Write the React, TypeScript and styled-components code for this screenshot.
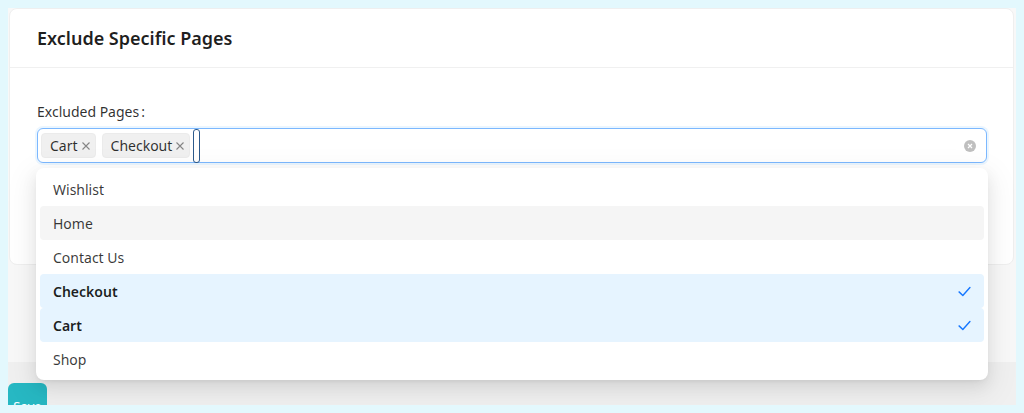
import React from "react";
import styled, { createGlobalStyle } from "styled-components";

const Global = createGlobalStyle`
  html, body { margin: 0; padding: 0; }
  body {
    background: #e3f8fd;
    font-family: "Noto Sans", "Open Sans", Arial, sans-serif;
    color: rgba(0,0,0,0.88);
    width: 1024px;
    height: 413px;
    overflow: hidden;
  }
  * { box-sizing: border-box; }
`;

const Frame = styled.div`
  margin: 8px;
  width: 1008px;
  height: 397px;
  display: flex;
  flex-direction: column;
  overflow: hidden;
  background: #f8f8f8;
`;

const Main = styled.div`
  flex: 1;
  padding: 0 2px 0 1px;
`;

const Card = styled.section`
  height: 257px;
  background: #fff;
  border: 1px solid #efefef;
  border-radius: 8px;
`;

const CardHeader = styled.header`
  height: 59px;
  display: flex;
  align-items: center;
  padding-left: 27px;
  border-bottom: 1px solid #f0f0f0;
`;

const Title = styled.h2`
  margin: 0;
  font-size: 18px;
  font-weight: 600;
  color: rgba(0,0,0,0.88);
`;

const CardBody = styled.div`
  padding: 33px 26px 0 27px;
`;

const Label = styled.label`
  display: block;
  font-size: 14px;
  line-height: 22px;
  color: rgba(0,0,0,0.82);
  margin-bottom: 5px;
`;

const Colon = styled.span`
  margin-left: 2px;
`;

const SelectWrap = styled.div`
  position: relative;
`;

const SelectBox = styled.div`
  height: 35px;
  display: flex;
  align-items: center;
  gap: 6px;
  padding: 0 10px 0 3px;
  border: 1px solid #7cb8ff;
  border-radius: 6px;
  box-shadow: 0 0 0 2px rgba(5,145,255,0.08);
  background: #fff;
`;

const Tag = styled.span`
  height: 25px;
  display: inline-flex;
  align-items: center;
  gap: 3px;
  padding: 0 4px 0 8px;
  background: rgba(0,0,0,0.06);
  border: 1px solid #ebebeb;
  border-radius: 4px;
  font-size: 14px;
  color: rgba(0,0,0,0.82);
`;

const Caret = styled.span`
  width: 7px;
  height: 34px;
  border: 1.5px solid #2d5a8c;
  border-radius: 3px;
  margin-left: -3px;
`;

const Spacer = styled.span`
  flex: 1;
`;

const Dropdown = styled.ul`
  position: absolute;
  left: -1px;
  right: -1px;
  top: 40px;
  margin: 0;
  padding: 4px;
  list-style: none;
  background: #fff;
  border-radius: 8px;
  box-shadow: 0 6px 16px 0 rgba(0,0,0,0.08), 0 3px 6px -4px rgba(0,0,0,0.12), 0 9px 28px 8px rgba(0,0,0,0.05);
  z-index: 5;
`;

const Option = styled.li<{ $selected?: boolean; $active?: boolean }>`
  height: 34px;
  display: flex;
  align-items: center;
  justify-content: space-between;
  padding: 0 12px 0 13px;
  border-radius: 4px;
  font-size: 14px;
  font-weight: ${(p) => (p.$selected ? 600 : 400)};
  color: rgba(0,0,0,${(p) => (p.$selected ? 0.88 : 0.78)});
  background: ${(p) => (p.$selected ? "#e6f4ff" : p.$active ? "#f5f5f5" : "transparent")};
`;

const Footer = styled.div`
  height: 43px;
  background: #f0f0f0;
  display: flex;
  align-items: flex-start;
  padding-top: 21px;
`;

const TealButton = styled.button`
  width: 39px;
  height: 30px;
  border: none;
  border-radius: 6px 6px 0 0;
  background: #27b8c3;
  color: #fff;
  font-family: inherit;
  font-size: 13px;
  padding: 16px 0 0;
  text-align: center;
  line-height: 14px;
`;

const TagClose = () => (
  <svg width="10" height="10" viewBox="0 0 10 10">
    <path d="M1.5 1.5 L8.5 8.5 M8.5 1.5 L1.5 8.5" stroke="rgba(0,0,0,0.45)" strokeWidth="1.1" />
  </svg>
);

const ClearIcon = () => (
  <svg width="12" height="12" viewBox="0 0 12 12">
    <circle cx="6" cy="6" r="6" fill="rgba(0,0,0,0.25)" />
    <path d="M4 4 L8 8 M8 4 L4 8" stroke="#fff" strokeWidth="1.2" />
  </svg>
);

const Check = () => (
  <svg width="15" height="15" viewBox="0 0 16 16">
    <path d="M2.2 8.4 L6.2 12.2 L13.8 3.8" fill="none" stroke="#1677ff" strokeWidth="1.5" strokeLinecap="round" strokeLinejoin="round" />
  </svg>
);

const options = [
  { label: "Wishlist" },
  { label: "Home", active: true },
  { label: "Contact Us" },
  { label: "Checkout", selected: true },
  { label: "Cart", selected: true },
  { label: "Shop" },
];

export default function App() {
  return (
    <>
      <Global />
      <Frame>
        <Main>
          <Card>
            <CardHeader>
              <Title>Exclude Specific Pages</Title>
            </CardHeader>
            <CardBody>
              <Label>
                Excluded Pages<Colon>:</Colon>
              </Label>
              <SelectWrap>
                <SelectBox>
                  <Tag>
                    Cart <TagClose />
                  </Tag>
                  <Tag>
                    Checkout <TagClose />
                  </Tag>
                  <Caret />
                  <Spacer />
                  <ClearIcon />
                </SelectBox>
                <Dropdown>
                  {options.map((o) => (
                    <Option key={o.label} $selected={o.selected} $active={o.active}>
                      {o.label}
                      {o.selected && <Check />}
                    </Option>
                  ))}
                </Dropdown>
              </SelectWrap>
            </CardBody>
          </Card>
        </Main>
        <Footer>
          <TealButton>Save</TealButton>
        </Footer>
      </Frame>
    </>
  );
}
